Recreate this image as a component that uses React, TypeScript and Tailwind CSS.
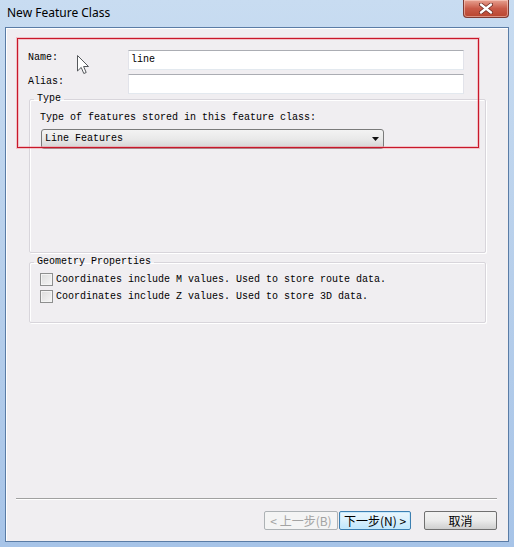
import React from "react";

const mono = "font-['Liberation_Mono','Noto_Sans_CJK_SC',monospace] text-[10px] leading-[12px] text-black";

function Checkbox() {
  return (
    <span className="w-[13px] h-[13px] border border-[#8e8f8f] bg-gradient-to-br from-[#dcdcdc] to-[#f6f6f6] shadow-[inset_0_0_0_1px_#f4f4f4]" />
  );
}

function Legend({ children }: { children: React.ReactNode }) {
  return <legend className={`ml-[4px] px-[3px] ${mono}`}>{children}</legend>;
}

export default function App() {
  return (
    <div className="w-[514px] h-[547px] flex flex-col overflow-hidden bg-gradient-to-b from-[#c8dcf1] via-[#b7cfeb] to-[#a7c4e8]">
      {/* title bar */}
      <div className="h-[27px] flex items-start justify-between pl-[7px] pr-[5px]">
        <span className="mt-[4px] font-['Noto_Sans',sans-serif] text-[12px] leading-[17px] text-black">
          New Feature Class
        </span>
        <button className="w-[46px] h-[18px] rounded-b-[4px] border border-t-0 border-[#7e3a33] bg-gradient-to-b from-[#e7a191] via-[#c95a48] to-[#b8452f] flex items-center justify-center shadow-[inset_0_0_0_1px_rgba(255,220,210,0.5)]">
          <svg width="14" height="11" viewBox="0 0 14 11">
            <path d="M2 1.5 L12 9.5 M12 1.5 L2 9.5" stroke="#6d2a22" strokeWidth="4" strokeLinecap="round" />
            <path d="M2 1.5 L12 9.5 M12 1.5 L2 9.5" stroke="#ffffff" strokeWidth="2.4" strokeLinecap="round" />
          </svg>
        </button>
      </div>

      {/* client area */}
      <div className="mx-[5px] mb-[5px] flex-1 relative flex flex-col border border-[#5a7ca6] bg-[#f0eef1] shadow-[inset_1px_1px_0_#ffffff]">
        {/* Name */}
        <div className="mt-[22px] ml-[22px] flex items-start h-[20px]">
          <span className={`w-[100px] pt-[2px] ${mono}`}>Name:</span>
          <div className="w-[336px] h-[20px] border border-[#abadb3] border-b-[#e3e9ef] border-x-[#e2e3ea] bg-white px-[2px] flex items-center">
            <span className={mono}>line</span>
          </div>
        </div>
        {/* Alias */}
        <div className="mt-[4px] ml-[22px] flex items-start h-[20px]">
          <span className={`w-[100px] pt-[2px] ${mono}`}>Alias:</span>
          <div className="w-[336px] h-[20px] border border-[#abadb3] border-b-[#e3e9ef] border-x-[#e2e3ea] bg-white" />
        </div>

        {/* Type group */}
        <fieldset className="-mt-px ml-[23px] mr-[22px] border border-[#d8d5db] rounded-[2px] shadow-[inset_1px_1px_0_#ffffff,1px_1px_0_#ffffff] pb-[103px]">
          <Legend>Type</Legend>
          <div className={`mt-[7px] ml-[10px] ${mono}`}>Type of features stored in this feature class:</div>
          <div className="mt-[5px] ml-[11px] w-[343px] h-[20px] rounded-[3px] border border-[#7a7a7a] bg-gradient-to-b from-[#f3f3f3] via-[#e9e9e9] to-[#d3d3d3] flex items-center justify-between pl-[3px] pr-[4px]">
            <span className={mono}>Line Features</span>
            <svg width="7" height="4" viewBox="0 0 7 4">
              <path d="M0 0 H7 L3.5 4 Z" fill="#111" />
            </svg>
          </div>
        </fieldset>

        {/* Geometry group */}
        <fieldset className="mt-[3px] ml-[23px] mr-[22px] border border-[#d8d5db] rounded-[2px] shadow-[inset_1px_1px_0_#ffffff,1px_1px_0_#ffffff] pb-[19px]">
          <Legend>Geometry Properties</Legend>
          <div className="mt-[5px] ml-[10px] flex flex-col gap-[4px]">
            <label className="flex items-center gap-[3px] h-[13px]">
              <Checkbox />
              <span className={mono}>Coordinates include M values. Used to store route data.</span>
            </label>
            <label className="flex items-center gap-[3px] h-[13px]">
              <Checkbox />
              <span className={mono}>Coordinates include Z values. Used to store 3D data.</span>
            </label>
          </div>
        </fieldset>

        <div className="flex-1" />

        {/* separator */}
        <div className="ml-[10px] mr-[11px] h-px bg-[#a0a0a0] shadow-[0_1px_0_#ffffff]" />

        {/* buttons */}
        <div className="mt-[12px] mb-[11px] mr-[11px] flex justify-end h-[19px] font-['Noto_Sans_CJK_SC',sans-serif] text-[12px] leading-[15px]">
          <button className="w-[74px] h-[19px] rounded-[2px] border border-[#adb2b5] bg-[#f4f4f4] text-[#a3a3a3]">
            &lt; 上一步(B)
          </button>
          <button className="ml-px w-[72px] h-[19px] rounded-[2px] border border-[#3c7fb1] bg-gradient-to-b from-[#eaf6fd] via-[#d9f0fc] to-[#bee6fd] text-black shadow-[inset_0_0_0_1px_#c7e9fb]">
            下一步(N) &gt;
          </button>
          <button className="ml-[13px] w-[73px] h-[19px] rounded-[2px] border border-[#707070] bg-gradient-to-b from-[#f2f2f2] via-[#ebebeb] to-[#cfcfcf] text-black">
            取消
          </button>
        </div>

        {/* red annotation box */}
        <div className="absolute left-[11px] top-[10px] w-[462px] h-[110px] border border-[#c8182a] shadow-[0_0_0_1px_rgba(240,140,150,0.45),inset_0_0_0_1px_rgba(240,140,150,0.45)] pointer-events-none" />

        {/* mouse cursor */}
        <svg className="absolute left-[71px] top-[27px]" width="13" height="20" viewBox="0 0 13 20">
          <path d="M0.5 0.5 L0.5 16 L4.2 12.4 L6.8 18.5 L9.2 17.5 L6.6 11.5 L11.5 11.5 Z" fill="#ffffff" stroke="#55585c" strokeWidth="1" strokeLinejoin="round" />
        </svg>
      </div>
    </div>
  );
}
